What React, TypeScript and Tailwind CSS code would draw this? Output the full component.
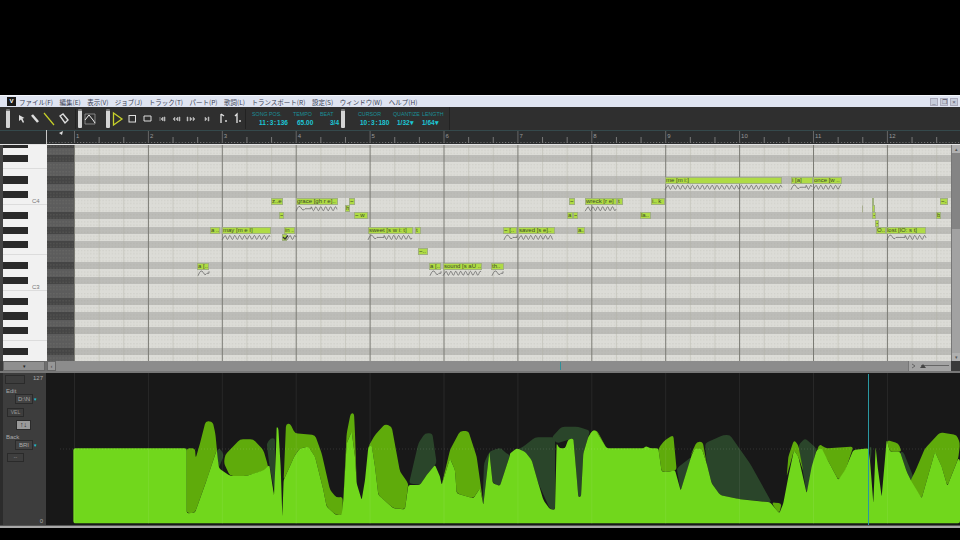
import React from 'react';

const FONT = "font-['Liberation_Sans',sans-serif]";
const ROW = 7.1667;
const ROW_OFFSET = -4.33;
const BAR = 73.9;
const rows = Array.from({ length: 32 }, (_, i) => i);
const blackKey = (i: number) => [0, 2, 5, 7, 10].includes(i % 12);

const menus = ['ファイル(F)', '編集(E)', '表示(V)', 'ジョブ(J)', 'トラック(T)', 'パート(P)', '歌詞(L)', 'トランスポート(R)', '設定(S)', 'ウィンドウ(W)', 'ヘルプ(H)'];

// left x, width, row index (all relative to page x)
const notes: { x: number; w: number; r: number; t: string }[] = [
    { x: 665, w: 117, r: 5, t: 'me [m i:]' },
    { x: 791, w: 22, r: 5, t: 'i [a]' },
    { x: 813, w: 29, r: 5, t: 'once [w ..' },
    { x: 271, w: 12, r: 8, t: 'z..e' },
    { x: 296, w: 42, r: 8, t: 'grace [gh r e]..' },
    { x: 349, w: 6, r: 8, t: '~' },
    { x: 569, w: 6, r: 8, t: '~' },
    { x: 585, w: 32, r: 8, t: 'wreck [r e]' },
    { x: 617, w: 6, r: 8, t: 't' },
    { x: 651, w: 14, r: 8, t: 'i.. k' },
    { x: 872, w: 2, r: 8, t: '' },
    { x: 940, w: 8, r: 8, t: '~..' },
    { x: 345, w: 5, r: 9, t: 'h' },
    { x: 872, w: 3, r: 9, t: '' },
    { x: 279, w: 5, r: 10, t: '~' },
    { x: 354, w: 14, r: 10, t: '~ w' },
    { x: 567, w: 6, r: 10, t: 'a' },
    { x: 573, w: 5, r: 10, t: '~' },
    { x: 640, w: 11, r: 10, t: 'la..' },
    { x: 872, w: 4, r: 10, t: '~' },
    { x: 936, w: 5, r: 10, t: 'b' },
    { x: 875, w: 4, r: 11, t: '~' },
    { x: 210, w: 10, r: 12, t: 'a ..' },
    { x: 222, w: 49, r: 12, t: 'may [m e I]' },
    { x: 284, w: 11, r: 12, t: 'in ..' },
    { x: 368, w: 45, r: 12, t: 'sweet [s w i: t]' },
    { x: 415, w: 6, r: 12, t: 't' },
    { x: 503, w: 14, r: 12, t: '~ [..' },
    { x: 518, w: 37, r: 12, t: 'saved [s e]..' },
    { x: 577, w: 8, r: 12, t: 'a..' },
    { x: 876, w: 10, r: 12, t: 'O..' },
    { x: 886, w: 40, r: 12, t: 'lost [lO: s t]' },
    { x: 282, w: 5, r: 13, t: '' },
    { x: 418, w: 10, r: 15, t: '~..' },
    { x: 197, w: 12, r: 17, t: 'a [..' },
    { x: 429, w: 12, r: 17, t: 'a [..' },
    { x: 443, w: 39, r: 17, t: 'sound [s aU ..' },
    { x: 491, w: 13, r: 17, t: 'th..' },
];

// hump start, flat end (vibrato start), end, row of the wave
const waves = [
    [665, 665, 782, 6], [791, 806, 812, 6], [813, 813, 841, 6],
    [296, 311, 337, 9], [585, 585, 616, 9],
    [222, 222, 270, 13], [287, 287, 296, 13], [368, 384, 412, 13], [504, 517, 517, 13], [518, 518, 553, 13], [887, 905, 926, 13],
    [198, 209, 209, 18], [430, 441, 441, 18], [443, 443, 481, 18], [492, 503, 503, 18],
];

function wavePath([a, b, c, r]: number[]) {
    const mid = r * ROW + ROW_OFFSET + ROW / 2;
    let d = `M${a} ${mid + 2.5}`;
    if (b > a) {
        // attack hump then flat
        d += ` Q${a + 3} ${mid - 5} ${a + 5} ${mid - 1} Q${a + 7} ${mid + 3} ${a + 9} ${mid}`;
        d += ` L${b} ${mid}`;
    } else {
        d += ` L${a + 3} ${mid - 2}`;
    }
    const start = b > a ? b : a + 3;
    for (let x = start; x <= c; x += 0.5) {
        d += ` L${x} ${mid + Math.sin(((x - start) / 4.9) * Math.PI * 2 + Math.PI / 2) * -2}`;
    }
    return d;
}

// closed path from flat [x, y, ...] list, corners rounded so the curve looks like the reference
function roundPath(list: number[], off = 0, r = 9) {
    const p: number[][] = [];
    for (let i = 0; i < list.length; i += 2) p.push([list[i] + off, list[i + 1]]);
    const toward = (a: number[], b: number[]) => {
        const len = Math.hypot(b[0] - a[0], b[1] - a[1]) || 1;
        const t = Math.min(r, len / 2) / len;
        return [a[0] + (b[0] - a[0]) * t, a[1] + (b[1] - a[1]) * t];
    };
    let d = '';
    p.forEach((cur, i) => {
        const a = toward(cur, p[(i - 1 + p.length) % p.length]);
        const b = toward(cur, p[(i + 1) % p.length]);
        d += `${i === 0 ? 'M' : 'L'}${a[0]} ${a[1]} Q${cur[0]} ${cur[1]} ${b[0]} ${b[1]} `;
    });
    return d + 'Z';
}

const brightA = [40, 370, 40, 145, 380, 145, 380, 340, 405, 338, 440, 240, 470, 150, 477, 205, 510, 228, 560, 228, 612, 210, 628, 195, 642, 287, 648, 150, 650, 80, 655, 85, 662, 200, 667, 350, 671, 240, 705, 165, 720, 145, 745, 140, 765, 170, 790, 270, 800, 320, 828, 345, 845, 345, 850, 300, 860, 130, 875, 95, 885, 170, 890, 250, 905, 300, 915, 240, 925, 140, 935, 135, 945, 200, 955, 285, 1000, 325, 1035, 328, 1045, 255, 1080, 255, 1100, 225, 1125, 195, 1140, 230, 1145, 255, 1170, 175, 1185, 210, 1190, 280, 1240, 295, 1260, 265, 1270, 315, 1288, 155, 1298, 250, 1320, 258, 1350, 165];
const brightB = [0, 160, 20, 145, 45, 155, 65, 180, 85, 250, 100, 300, 120, 328, 135, 330, 140, 130, 148, 145, 165, 145, 175, 118, 190, 115, 200, 230, 205, 292, 213, 290, 220, 160, 235, 110, 250, 90, 260, 95, 290, 145, 400, 145, 408, 138, 420, 145, 445, 145, 455, 215, 480, 215, 495, 210, 512, 272, 545, 165, 555, 145, 575, 145, 590, 190, 605, 250, 630, 285, 685, 297, 780, 307, 808, 340, 820, 310, 835, 230, 852, 150, 865, 170, 890, 280, 905, 200, 920, 150, 935, 145, 950, 175, 985, 240, 1005, 210, 1030, 150, 1075, 145, 1080, 180, 1090, 310, 1097, 140, 1103, 200, 1115, 290, 1130, 120, 1140, 155, 1170, 155, 1190, 215, 1205, 245, 1235, 295, 1275, 155, 1295, 200, 1312, 258, 1345, 175, 1350, 180, 1350, 370];

const midA = [
    [380, 145, 405, 145, 407, 175, 420, 130, 437, 63, 458, 65, 466, 100, 476, 205, 470, 150, 440, 240, 405, 338, 380, 340],
    [492, 190, 495, 165, 540, 118, 580, 118, 610, 150, 622, 190, 642, 287, 628, 260, 612, 212, 560, 228, 510, 228],
    [671, 240, 678, 72, 690, 70, 705, 100, 765, 105, 785, 160, 810, 270, 830, 293, 848, 290, 848, 345, 828, 345, 800, 320, 790, 270, 765, 170, 745, 140, 720, 145, 705, 165],
    [850, 300, 860, 100, 872, 40, 882, 40, 885, 100, 890, 250, 885, 170, 875, 95, 860, 130],
    [925, 140, 945, 105, 975, 72, 995, 80, 1020, 215, 1045, 250, 1035, 328, 1000, 325, 955, 285, 945, 200, 935, 135],
    [1145, 255, 1170, 150, 1200, 93, 1225, 93, 1250, 170, 1270, 312, 1260, 265, 1240, 295, 1190, 280, 1185, 210, 1170, 175],
];
const midB = [
    [237, 105, 250, 90, 262, 93, 290, 145, 260, 95],
    [445, 145, 465, 120, 490, 105, 500, 210, 480, 215, 455, 215],
    [540, 170, 560, 125, 578, 125, 590, 190, 575, 145, 555, 145],
    [785, 307, 815, 310, 808, 340, 795, 325],
    [830, 230, 835, 170, 852, 120, 865, 135, 880, 215, 865, 170, 852, 150],
    [920, 150, 930, 132, 945, 145, 1030, 140, 1005, 215, 985, 240, 950, 175],
    [1130, 120, 1165, 130, 1175, 155, 1140, 155],
    [1200, 245, 1215, 215, 1245, 145, 1290, 97, 1340, 105, 1350, 130, 1345, 175, 1312, 258, 1295, 200, 1275, 155, 1235, 295],
];
const darkA = [
    [470, 150, 480, 145, 492, 165, 476, 205],
    [620, 130, 632, 115, 645, 115, 645, 280, 628, 195],
    [1047, 250, 1075, 130, 1095, 100, 1117, 100, 1130, 190, 1100, 225, 1080, 255],
    [1268, 300, 1272, 190, 1288, 155, 1320, 143, 1340, 160, 1350, 165, 1320, 258, 1298, 250, 1288, 155, 1270, 315],
];
const darkB = [
    [0, 165, 20, 150, 40, 140, 75, 112, 135, 112, 135, 330, 120, 328, 85, 250, 65, 180, 45, 155],
    [125, 112, 155, 80, 205, 80, 240, 92, 220, 160, 213, 290, 205, 292, 190, 115, 140, 130],
    [500, 205, 545, 170, 512, 272],
    [585, 130, 640, 105, 660, 105, 720, 190, 785, 307, 685, 297, 630, 285, 605, 250, 590, 190],
    [865, 135, 885, 115, 920, 145, 890, 280],
    [1078, 140, 1085, 140, 1082, 190],
    [1170, 155, 1180, 155, 1210, 230, 1205, 245, 1190, 215],
];

function Grip() {
    return <div className="w-[4px] h-[19px] rounded-[1px] bg-[#d4d4d4] border-t-2 border-[#777] shrink-0" />;
}

function SmallBtn({ children, light }: { children: React.ReactNode; light?: boolean }) {
    return (
        <div className={`flex items-center justify-center w-[17px] h-[9px] text-[5px] text-[#999] border border-[#2a2a2a] ${light ? 'bg-[#999]' : 'bg-[#3e3e3e]'}`}>
            {children}
        </div>
    );
}

function TealLabel({ className, children }: { className: string; children: React.ReactNode }) {
    return <span className={`absolute top-[4px] text-[5.300px] leading-[7px] text-[#1a8f98] whitespace-nowrap ${className}`}>{children}</span>;
}

function TealValue({ className, children }: { className: string; children: React.ReactNode }) {
    return <span className={`absolute top-[12px] text-[6.500px] leading-[8px] font-bold [word-spacing:-1px] text-[#1cc6d6] whitespace-nowrap ${className}`}>{children}</span>;
}

function Toolbar() {
    return (
        <div className="relative flex items-center h-[23px] bg-[#2f2f2f] pl-[6px] shrink-0">
            <Grip />
            <svg width="64" height="18" viewBox="0 0 64 18" className="ml-[4px] shrink-0">
                <path d="M5 5 L5 11 L7 9.500 L9 13 L10 12 L8.500 8.500 L10.500 8 Z" fill="#ddd" />
                <path d="M18 5 L24 12" stroke="#ddd" strokeWidth="2.600" />
                <path d="M30 3 L40 15" stroke="#c6d02a" strokeWidth="1.200" />
                <path d="M46 6 L49 4 L54 10 L51 13 Z" fill="none" stroke="#ddd" strokeWidth="1.400" />
            </svg>
            <div className="ml-[-3px] w-[1px] h-[20px] bg-[#222]" />
            <div className="ml-[2px]"><Grip /></div>
            <svg width="12" height="14" viewBox="0 0 12 14" className="ml-[2px] shrink-0">
                <path d="M1 2 L11 2 L11 12 L1 12 Z" fill="none" stroke="#999" strokeWidth="0.800" />
                <path d="M1 8 L5 3 L9 8 L11 11" fill="none" stroke="#eee" strokeWidth="1" />
            </svg>
            <div className="ml-[10px]"><Grip /></div>
            <svg width="135" height="16" viewBox="0 0 135 16" className="ml-[2px] shrink-0">
                <path d="M1.500 2 L10 8 L1.500 14 Z" fill="none" stroke="#c6d02a" strokeWidth="1.300" />
                <rect x="17" y="4.500" width="6.500" height="6.500" fill="none" stroke="#ddd" strokeWidth="1" />
                <path d="M32 5 L39 5 L39 10 L32 10 Z" fill="none" stroke="#ddd" strokeWidth="1" />
                <path d="M48 6 v4 M49 8 l2 -2 v4 z M52 6 h1 v4 h-1 z" fill="#bbb" stroke="#bbb" strokeWidth="0.600" />
                <path d="M61 8 l2 -2 v4 z M64 8 l2 -2 v4 z M67 6 h1 v4 h-1 z" fill="#bbb" stroke="#bbb" strokeWidth="0.500" />
                <path d="M75 6 h1 v4 h-1 z M78 6 l2 2 l-2 2 z M81 6 l2 2 l-2 2 z" fill="#bbb" stroke="#bbb" strokeWidth="0.500" />
                <path d="M93 6 l2 2 l-2 2 z M96 6 h1 v4 h-1 z" fill="#bbb" stroke="#bbb" strokeWidth="0.500" />
                <path d="M109 3 v9 M109 3 l3 2" fill="none" stroke="#e4e4e4" strokeWidth="1.300" />
                <rect x="113" y="9" width="2" height="2" fill="#aaa" />
                <path d="M123 5 l2 -2 v9" fill="none" stroke="#e4e4e4" strokeWidth="1.300" />
                <rect x="127" y="9" width="2" height="2" fill="#aaa" />
            </svg>
            <div className="absolute left-[245px] top-[2px] w-[1px] h-[20px] bg-[#222]" />
            <TealLabel className="left-[252px]">SONG POS.</TealLabel>
            <TealLabel className="left-[293px]">TEMPO</TealLabel>
            <TealLabel className="left-[320px]">BEAT</TealLabel>
            <TealValue className="left-[259px]">11 : 3 : 136</TealValue>
            <TealValue className="left-[297px]">65.00</TealValue>
            <TealValue className="left-[330px]">3/4</TealValue>
            <div className="absolute left-[341px] top-[2px]"><Grip /></div>
            <TealLabel className="left-[358px]">CURSOR</TealLabel>
            <TealLabel className="left-[393px]">QUANTIZE</TealLabel>
            <TealLabel className="left-[422px]">LENGTH</TealLabel>
            <TealValue className="left-[360px]">10 : 3 : 180</TealValue>
            <TealValue className="left-[397px]">1/32 ▾</TealValue>
            <TealValue className="left-[422px]">1/64 ▾</TealValue>
            <div className="absolute left-[449px] top-0 w-[1px] h-[23px] bg-[#222]" />
        </div>
    );
}

function Ruler() {
    const beats = Array.from({ length: 36 }, (_, i) => 74 + (i * BAR) / 3);
    return (
        <div className="relative h-[15px] bg-[#2c2e2f] border-b border-[#e4e4e4] shrink-0 overflow-hidden">
            <svg width="960" height="15" className="absolute left-0 top-0">
                <defs>
                    <pattern id="rulerTick" width="3.080" height="3" patternUnits="userSpaceOnUse">
                        <rect width="1" height="2" fill="#777" />
                    </pattern>
                </defs>
                <rect x="0" y="0" width="960" height="1" fill="#34494c" />
                <rect x="47" y="11" width="913" height="2" fill="url(#rulerTick)" />
                <rect x="46" y="0" width="1" height="14" fill="#c8c8c8" />
                <path d="M59 3 L63 1 L62 5 Z" fill="#ddd" />
                {beats.map((x, i) => (
                    <rect key={i} x={x} y={i % 3 === 0 ? 1 : 7} width="1" height={i % 3 === 0 ? 12 : 6} fill={i % 3 === 0 ? '#666' : '#777'} />
                ))}
            </svg>
            {Array.from({ length: 12 }, (_, i) => (
                <span
                    key={i}
                    className="absolute top-[3px] text-[6px] leading-[7px] text-[#999]"
                    style={{ left: 76 + i * BAR }}
                >
                    {i + 1}
                </span>
            ))}
        </div>
    );
}

function PianoRoll() {
    return (
        <div className="relative flex h-[216px] bg-[#3a3a3a] shrink-0 overflow-hidden">
            <div className="w-[3px] bg-[#444] shrink-0" />
            {/* keys */}
            <div className="w-[44px] shrink-0 mt-[-4.33px]">
                {rows.map((i) => (
                    <div key={i} className={`relative h-[7.1667px] bg-[#f1f1f1] ${i % 12 === 8 || i % 12 === 3 ? 'border-b border-[#dcdcdc]' : ''}`}>
                        {blackKey(i) && <div className="h-full w-[25px] bg-[#2a2a2a]" />}
                        {i === 8 && <span className="absolute left-[29px] top-0 text-[6px] leading-[7px] text-[#777]">C4</span>}
                        {i === 20 && <span className="absolute left-[29px] top-0 text-[6px] leading-[7px] text-[#777]">C3</span>}
                    </div>
                ))}
            </div>
            {/* dark column left of song start */}
            <div className="w-[27px] shrink-0 mt-[-4.33px]">
                {rows.map((i) => (
                    <div key={i} className={`h-[7.1667px] ${blackKey(i) ? 'bg-[#454545]' : 'bg-[#5c5c5c]'}`} />
                ))}
            </div>
            {/* grid */}
            <div className="w-[877px] shrink-0 mt-[-4.33px]">
                {rows.map((i) => (
                    <div key={i} className={`h-[7.1667px] ${blackKey(i) ? 'bg-[#bcbcb8]' : 'bg-[#dcdcd7]'}`} />
                ))}
            </div>
            <div className="flex flex-col w-[9px] ml-auto bg-[#a2a2a2] border-l border-[#777] shrink-0">
                <div className="flex items-center justify-center h-[8px] bg-[#b0b0b0] text-[5px] leading-none text-[#555]">▴</div>
                <div className="h-[76px] bg-[#848484]" />
                <div className="flex-1" />
                <div className="flex items-center justify-center h-[8px] bg-[#b0b0b0] text-[5px] leading-none text-[#555]">▾</div>
            </div>

            <svg width="960" height="216" className="absolute left-0 top-0 pointer-events-none">
                <defs>
                    <pattern id="gridDots" width="3.080" height="7.1667" patternUnits="userSpaceOnUse" y="-4.33">
                        <rect x="1" y="2" width="1" height="1" fill="#9a9a90" opacity="0.300" />
                        <rect x="1" y="5" width="1" height="1" fill="#9a9a90" opacity="0.300" />
                    </pattern>
                </defs>
                <rect x="47" width="904" height="216" fill="url(#gridDots)" />
                {Array.from({ length: 36 }, (_, i) => (
                    <rect
                        key={i}
                        x={74 + (i * BAR) / 3}
                        width="1"
                        height="216"
                        fill={i % 3 === 0 ? '#7b7b74' : '#b0b0a0'}
                        opacity={i % 3 === 0 ? 1 : 0.4}
                    />
                ))}
            </svg>

            {notes.map((n, i) => (
                <div
                    key={i}
                    className="absolute h-[7px] bg-[#afdb45] border border-[#a0b080] overflow-hidden whitespace-nowrap text-[6px] leading-[5px] text-[#3c4a28]"
                    style={{ left: n.x, width: n.w, top: n.r * ROW + ROW_OFFSET }}
                >
                    {n.t}
                </div>
            ))}

            <svg width="960" height="216" className="absolute left-0 top-0 pointer-events-none">
                {waves.map((w, i) => (
                    <path key={i} d={wavePath(w)} fill="none" stroke="#5c5c5c" strokeWidth="0.700" />
                ))}
                <rect x="862" y="60.500" width="1" height="7" fill="#a8ad90" />
                <path d="M283 92 l2 2 l3 -3.500" fill="none" stroke="#333" strokeWidth="1.200" />
            </svg>
        </div>
    );
}

function HScroll() {
    return (
        <div className="flex h-[10px] bg-[#6e6e6e] shrink-0">
            <div className="w-[3px] bg-[#3a3a3a]" />
            <div className="flex items-center justify-center w-[42px] bg-[#8f8f8f] border border-[#666] text-[5px] leading-none text-[#222]">▾</div>
            <div className="flex items-center justify-center w-[9px] ml-[2px] bg-[#979797] border border-[#666] text-[5px] leading-none text-[#333]">‹</div>
            <div className="relative w-[852px] bg-[#8c8c8c]">
                <div className="absolute left-[504px] top-[1px] w-[1px] h-[8px] bg-[#2f8f98]" />
            </div>
            <div className="relative flex-1 bg-[#a4a4a4] border-l border-[#777]">
                <svg width="43" height="10" className="absolute left-0 top-0">
                    <path d="M3 3 L6 5 L3 7" fill="none" stroke="#555" strokeWidth="0.800" />
                    <rect x="12" y="4" width="28" height="1" fill="#666" />
                    <path d="M11 7 L14 3 L17 7 Z" fill="#444" />
                </svg>
            </div>
            <div className="w-[9px] bg-[#3a3a3a]" />
        </div>
    );
}

function SideBar() {
    return (
        <div className={`relative flex flex-col w-[46px] shrink-0 bg-[#3d3d3d] border-l-[3px] border-[#2c2c2c] text-[6px] text-[#aaa] ${FONT}`}>
            <div className="flex items-start pt-[2px] pl-[2px]">
                <div className="w-[20px] h-[9px] border border-[#2b2b2b]" />
                <span className="ml-[8px] leading-[7px]">127</span>
            </div>
            <span className="ml-[3px] mt-[4px] leading-[7px]">Edit</span>
            <div className="flex items-center ml-[12px] mt-[-1px]">
                <div className="flex items-center justify-center w-[18px] h-[10px] border border-[#2b2b2b] bg-[#424242]">D:\N</div>
                <span className="ml-[1px] text-[5px] leading-none text-[#1cc6d6]">▾</span>
            </div>
            <div className="ml-[4px] mt-[4px]"><SmallBtn>VEL</SmallBtn></div>
            <div className="flex items-center justify-center ml-[13px] mt-[3px] w-[15px] h-[10px] bg-[#9a9a9a] border border-[#2b2b2b] text-[7px] font-bold text-[#222]">↑↓</div>
            <span className="ml-[3px] mt-[4px] leading-[7px]">Back</span>
            <div className="flex items-center ml-[12px] mt-[-1px]">
                <div className="flex items-center justify-center w-[18px] h-[10px] border border-[#2b2b2b] bg-[#424242]">BRI</div>
                <span className="ml-[1px] text-[5px] leading-none text-[#1cc6d6]">▾</span>
            </div>
            <div className="ml-[4px] mt-[3px]"><SmallBtn>--</SmallBtn></div>
            <span className="absolute right-[3px] bottom-[0px] leading-[7px]">0</span>
        </div>
    );
}

function ControlGraph() {
    return (
        <div className="relative flex-1 bg-[#181818] overflow-hidden">
            <svg width="900" height="135" viewBox="0 0 2700 405" className="absolute left-[14px] top-[27px]">
                {darkA.map((p, i) => <path key={i} d={roundPath(p)} fill="#2a452a" />)}
                {darkB.map((p, i) => <path key={i} d={roundPath(p, 1350)} fill="#2a452a" />)}
                {midA.map((p, i) => <path key={i} d={roundPath(p)} fill="#5fab0b" />)}
                {midB.map((p, i) => <path key={i} d={roundPath(p, 1350)} fill="#5fab0b" />)}
                <path d={roundPath([...brightA, ...brightB.map((v, i) => (i % 2 === 0 ? v + 1350 : v))], 0, 6)} fill="#71d71c" />
                <line x1="0" y1="147" x2="2700" y2="147" stroke="#fff" strokeOpacity="0.180" strokeWidth="2" strokeDasharray="3 6" />
            </svg>
            <svg width="914" height="152" className="absolute left-0 top-0">
                {Array.from({ length: 12 }, (_, i) => (
                    <rect key={i} x={28 + i * BAR} y="0" width="1" height="151" fill="#fff" opacity="0.070" />
                ))}
            </svg>
            <div className="absolute left-[822px] top-[1px] bottom-0 w-[1px] bg-[#2a98a2]" />
        </div>
    );
}

export default function App() {
    return (
        <div className={`w-[960px] h-[540px] bg-black overflow-hidden ${FONT}`}>
            <div className="h-[95px]" />
            <div className="flex items-center h-[12px] pl-[7px] pr-[2px] bg-[#dfe4f1] border-t border-[#f4f6fb] text-[#3a3f55]">
                <div className="flex items-center justify-center w-[9px] h-[9px] bg-[#1a1a1a] text-[6px] font-bold text-white">V</div>
                <div className="flex ml-[3px] gap-[6.500px] text-[6.500px] leading-[10px] font-['Noto_Sans_CJK_JP',sans-serif] whitespace-nowrap">
                    {menus.map((m) => <span key={m}>{m}</span>)}
                </div>
                <div className="flex ml-auto gap-[2px]">
                    {['_', '❐', '×'].map((b) => (
                        <div key={b} className="flex items-center justify-center w-[8px] h-[8px] bg-[#c6ccda] border border-[#aab] text-[6px] leading-none text-[#556]">{b}</div>
                    ))}
                </div>
            </div>
            <Toolbar />
            <Ruler />
            <PianoRoll />
            <HScroll />
            <div className="h-[2px] bg-[#777]" />
            <div className="flex h-[152px]">
                <SideBar />
                <ControlGraph />
            </div>
            <div className="h-[1px] bg-[#555]" />
            <div className="h-[2px] bg-[#a8a8a8]" />
        </div>
    );
}
